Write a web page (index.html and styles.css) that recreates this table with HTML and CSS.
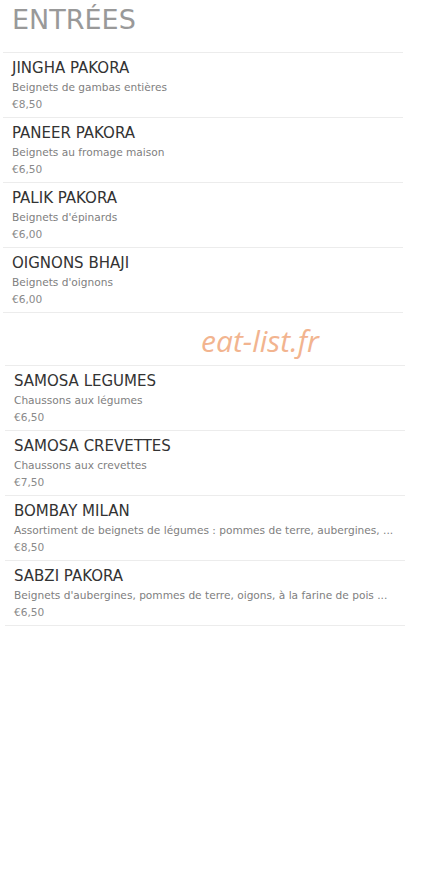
FILE: index.html
```html
<!DOCTYPE html>
<html lang="fr">
<head>
  <meta charset="UTF-8">
  <meta name="viewport" content="width=device-width, initial-scale=1.0">
  <title>Entrées</title>
  <link rel="stylesheet" href="styles.css">
</head>
<body>
  <div class="menu">
    <h2 class="cat-title">ENTRÉES</h2>

    <ul class="dishes">
      <li class="dish">
        <h4>JINGHA PAKORA</h4>
        <p class="desc">Beignets de gambas entières</p>
        <p class="price">€8,50</p>
      </li>
      <li class="dish">
        <h4>PANEER PAKORA</h4>
        <p class="desc">Beignets au fromage maison</p>
        <p class="price">€6,50</p>
      </li>
      <li class="dish">
        <h4>PALIK PAKORA</h4>
        <p class="desc">Beignets d'épinards</p>
        <p class="price">€6,00</p>
      </li>
      <li class="dish">
        <h4>OIGNONS BHAJI</h4>
        <p class="desc">Beignets d'oignons</p>
        <p class="price">€6,00</p>
      </li>
    </ul>

    <div class="brand">eat-list.fr</div>

    <ul class="dishes second">
      <li class="dish">
        <h4>SAMOSA LEGUMES</h4>
        <p class="desc">Chaussons aux légumes</p>
        <p class="price">€6,50</p>
      </li>
      <li class="dish">
        <h4>SAMOSA CREVETTES</h4>
        <p class="desc">Chaussons aux crevettes</p>
        <p class="price">€7,50</p>
      </li>
      <li class="dish">
        <h4>BOMBAY MILAN</h4>
        <p class="desc">Assortiment de beignets de légumes : pommes de terre, aubergines, ...</p>
        <p class="price">€8,50</p>
      </li>
      <li class="dish">
        <h4>SABZI PAKORA</h4>
        <p class="desc">Beignets d'aubergines, pommes de terre, oigons, à la farine de pois ...</p>
        <p class="price">€6,50</p>
      </li>
    </ul>
  </div>
</body>
</html>
```
FILE: styles.css
```css
/* Basic Style */
body {
  margin: 0;
  background: #fff;
  color: #333;
  font-family: 'DejaVu Sans', sans-serif;
}
.menu {
  width: 400px;
  padding: 0 0 0 3px;
}
ul {
  margin: 0;
  padding: 0;
  list-style: none;
}
/* Heading */
.cat-title {
  margin: 0;
  height: 52px;
  padding: 0 0 0 9px;
  font-size: 27px;
  font-weight: 400;
  line-height: 40px;
  color: #999;
}
/* Dishes */
.dish {
  height: 64px;
  padding: 0 0 0 9px;
  border-top: 1px solid #ececec;
}
.dishes {
  border-bottom: 1px solid #ececec;
}
.dish h4 {
  margin: 0;
  padding: 6px 0 0;
  font-size: 15px;
  font-weight: 400;
  line-height: 19px;
  color: #333;
}
.dish p {
  margin: 0;
  font-size: 10.6px;
  line-height: 17px;
  color: #808080;
  white-space: nowrap;
}
.dish .desc {
  padding: 1px 0 0;
}
.dish .price {
  color: #8a8a8a;
}
/* Watermark */
.brand {
  height: 52px;
  padding: 0 0 0 198px;
  font-family: 'Open Sans', sans-serif;
  font-style: italic;
  font-size: 30px;
  line-height: 56px;
  color: #f2b48f;
}
.second {
  margin-left: 2px;
  width: 400px;
}
```
